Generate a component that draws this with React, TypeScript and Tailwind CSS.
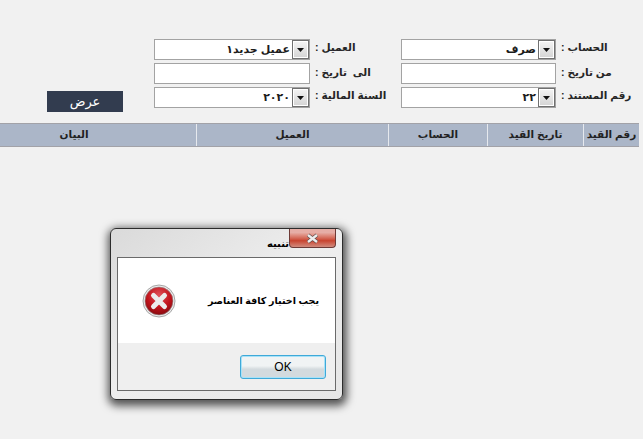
const ar = { fontFamily: '"Liberation Sans", "DejaVu Sans", sans-serif' };

function SelectBox({ value, arrow }: { value?: string; arrow?: boolean }) {
  return (
    <div className="flex h-[21px] items-stretch justify-end border border-[#a3a3a3] bg-white">
      {value && (
        <span dir="rtl" className="pr-[2px] text-[11px] font-bold leading-[18px] text-[#1c1c1c]">
          {value}
        </span>
      )}
      {arrow && (
        <span className="flex w-[17px] items-center justify-center border border-[#707070] bg-gradient-to-b from-[#f4f4f4] to-[#d4d4d4] shadow-[inset_0_0_0_1px_#ffffff]">
          <svg width="7" height="4" viewBox="0 0 7 4">
            <path d="M0 0h7L3.5 4z" fill="#111" />
          </svg>
        </span>
      )}
    </div>
  );
}

function FieldLabel({ text, left }: { text: string; left: string }) {
  return (
    <div className={`flex justify-start ${left}`}>
      <span dir="rtl" className="whitespace-pre text-[10.5px] font-bold leading-[16px] text-[#262626]">
        {text}
      </span>
    </div>
  );
}

function ErrorIcon() {
  return (
    <svg width="34" height="34" viewBox="0 0 34 34">
      <defs>
        <radialGradient id="errFill" cx="50%" cy="30%" r="75%">
          <stop offset="0%" stopColor="#e0525a" />
          <stop offset="55%" stopColor="#c2141c" />
          <stop offset="100%" stopColor="#7f080d" />
        </radialGradient>
      </defs>
      <circle cx="17" cy="17" r="16" fill="#ececec" stroke="#a6a6a6" />
      <circle cx="17" cy="17" r="14" fill="url(#errFill)" stroke="#8f8f8f" strokeWidth="0.6" />
      <path d="M11.5 11.5l11 11M22.5 11.5l-11 11" stroke="#ececec" strokeWidth="5" strokeLinecap="round" />
    </svg>
  );
}

export default function App() {
  const headers = [
    { text: "البيان", cls: "w-[197px] pr-[48px]" },
    { text: "العميل", cls: "w-[192px]" },
    { text: "الحساب", cls: "w-[99px]" },
    { text: "تاريخ القيد", cls: "w-[96px]" },
    { text: "رقم القيد", cls: "w-[55px]" },
  ];

  return (
    <div className="relative h-[439px] w-[643px] overflow-hidden bg-[#f1f1f1]" style={ar}>
      {/* filter form */}
      <div className="grid grid-cols-[76px_31px_156px_91px_155px_1fr] grid-rows-[21px_21px_21px] gap-y-[3px] pl-[47px] pt-[39px]">
        <div className="col-start-3 row-start-1">
          <SelectBox value="عميل جديد١" arrow />
        </div>
        <FieldLabel text="العميل :" left="col-start-4 row-start-1 pl-[5px]" />
        <div className="col-start-5 row-start-1">
          <SelectBox value="صرف" arrow />
        </div>
        <FieldLabel text="الحساب :" left="col-start-6 row-start-1 pl-[5px]" />

        <div className="col-start-3 row-start-2">
          <SelectBox />
        </div>
        <FieldLabel text="الى  تاريخ :" left="col-start-4 row-start-2 pl-[5px] pt-px" />
        <div className="col-start-5 row-start-2">
          <SelectBox />
        </div>
        <FieldLabel text="من تاريخ :" left="col-start-6 row-start-2 pl-[5px] pt-px" />

        <button className="col-start-1 row-start-3 mt-[4px] h-[21px] w-[76px] bg-[#323c4f] text-[13px] leading-[21px] text-white">
          عرض
        </button>
        <div className="col-start-3 row-start-3">
          <SelectBox value="٢٠٢٠" arrow />
        </div>
        <FieldLabel text="السنة المالية :" left="col-start-4 row-start-3 pl-[5px]" />
        <div className="col-start-5 row-start-3">
          <SelectBox value="٢٢" arrow />
        </div>
        <FieldLabel text="رقم المستند :" left="col-start-6 row-start-3 pl-[5px]" />
      </div>

      {/* table header */}
      <div className="mt-[15px] flex h-[24px] w-[639px] border-y border-[#a2a2a8] bg-[#abb6c8]">
        {headers.map((h) => (
          <div
            key={h.text}
            dir="rtl"
            className={`${h.cls} whitespace-nowrap border-r border-[#e6e9ee] text-center text-[10.5px] font-bold leading-[20px] text-[#222] last:border-r-0`}
          >
            {h.text}
          </div>
        ))}
      </div>

      {/* alert dialog */}
      <div className="absolute left-[110px] top-[228px] flex h-[172px] w-[233px] flex-col rounded-[6px] border border-[#2c2c2c] bg-gradient-to-br from-[#dadada] via-[#eeeeee] to-[#e6e6e6] px-[6px] pb-[8px] shadow-[1px_3px_8px_3px_rgba(0,0,0,0.65)]">
        <div className="flex h-[28px] flex-none items-start justify-end">
          <span dir="rtl" className="mt-[8px] text-[10px] font-bold leading-[14px] text-black">
            تنبيه
          </span>
          <div className="flex h-[19px] w-[47px] items-center justify-center rounded-b-[4px] border border-t-0 border-[#6e3a36] bg-gradient-to-b from-[#e6aea6] from-20% via-[#c8432f] via-65% to-[#d08a7e]">
            <svg width="15" height="11" viewBox="0 0 15 11">
              <path d="M3 2l9 7M12 2L3 9" stroke="#5a4a4a" strokeWidth="3.6" />
              <path d="M3 2l9 7M12 2L3 9" stroke="#eeeeee" strokeWidth="2.4" />
            </svg>
          </div>
        </div>
        <div className="flex min-h-0 flex-1 flex-col border border-[#6a6a6a] bg-[#efefef]">
          <div className="flex h-[85px] items-center justify-between bg-white pl-[24px] pr-[16px]">
            <ErrorIcon />
            <span dir="rtl" className="mt-[2px] whitespace-nowrap text-[9.5px] font-bold text-black">
              يجب اختيار كافة العناصر
            </span>
          </div>
          <div className="flex flex-1 items-start justify-end pr-[9px] pt-[12px]">
            <button className="h-[24px] w-[86px] rounded-[3px] border border-[#3fa9d8] bg-gradient-to-b from-[#f0f3f4] from-45% to-[#d3dade] to-60% text-[12px] leading-[20px] text-black shadow-[inset_0_0_0_1px_#a8e2f8]">
              OK
            </button>
          </div>
        </div>
      </div>
    </div>
  );
}
